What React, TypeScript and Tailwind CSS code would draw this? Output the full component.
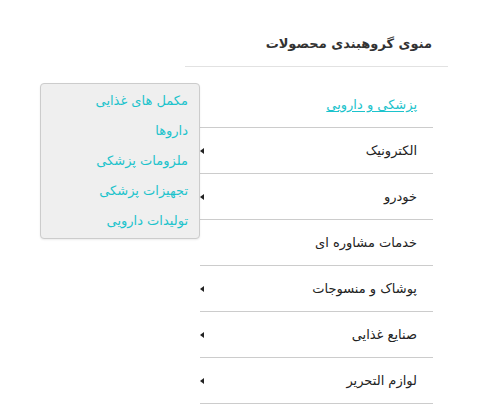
import React from "react";

const items: { label: string; arrow: boolean }[] = [
  { label: "الکترونیک", arrow: true },
  { label: "خودرو", arrow: true },
  { label: "خدمات مشاوره ای", arrow: false },
  { label: "پوشاک و منسوجات", arrow: true },
  { label: "صنایع غذایی", arrow: true },
  { label: "لوازم التحریر", arrow: true },
];

const sub = ["مکمل های غذایی", "داروها", "ملزومات پزشکی", "تجهیزات پزشکی", "تولیدات دارویی"];

function Arrow() {
  return (
    <span className="absolute left-0 top-1/2 -translate-y-1/2 w-0 h-0 border-y-[3.5px] border-y-transparent border-r-[4px] border-r-[#222]" />
  );
}

export default function App() {
  return (
    <div className="w-[483px] h-[407px] bg-white overflow-hidden font-['DejaVu_Sans',sans-serif]" dir="rtl">
      <div className="mr-[35px] w-[263px] pt-[33px]">
        <div className="px-4 pb-[11px] border-b border-[#e2e2e2] text-[13px] font-bold text-[#333] leading-[22px]">
          منوی گروهبندی محصولات
        </div>
        <ul className="mx-[15px] mt-[15px]">
          <li className="relative h-[46px] border-b border-[#cccccc] flex items-center pr-4">
            <a className="text-[13px] text-[#1cc3cc] underline underline-offset-2">پزشکی و دارویی</a>
            <div className="absolute right-full top-[1px] w-[160px] py-[2px] bg-[#efefef] border border-[#cccccc] rounded-[4px] shadow-[0_1px_2px_rgba(0,0,0,0.08)] z-10">
              {sub.map((s) => (
                <div key={s} className="h-[30px] flex items-center pr-[11px] text-[13px] text-[#1cc3cc]">
                  {s}
                </div>
              ))}
            </div>
          </li>
          {items.map((it) => (
            <li key={it.label} className="relative h-[46px] border-b border-[#cccccc] flex items-center pr-4 text-[13px] text-[#222]">
              {it.label}
              {it.arrow && <Arrow />}
            </li>
          ))}
        </ul>
      </div>
    </div>
  );
}
